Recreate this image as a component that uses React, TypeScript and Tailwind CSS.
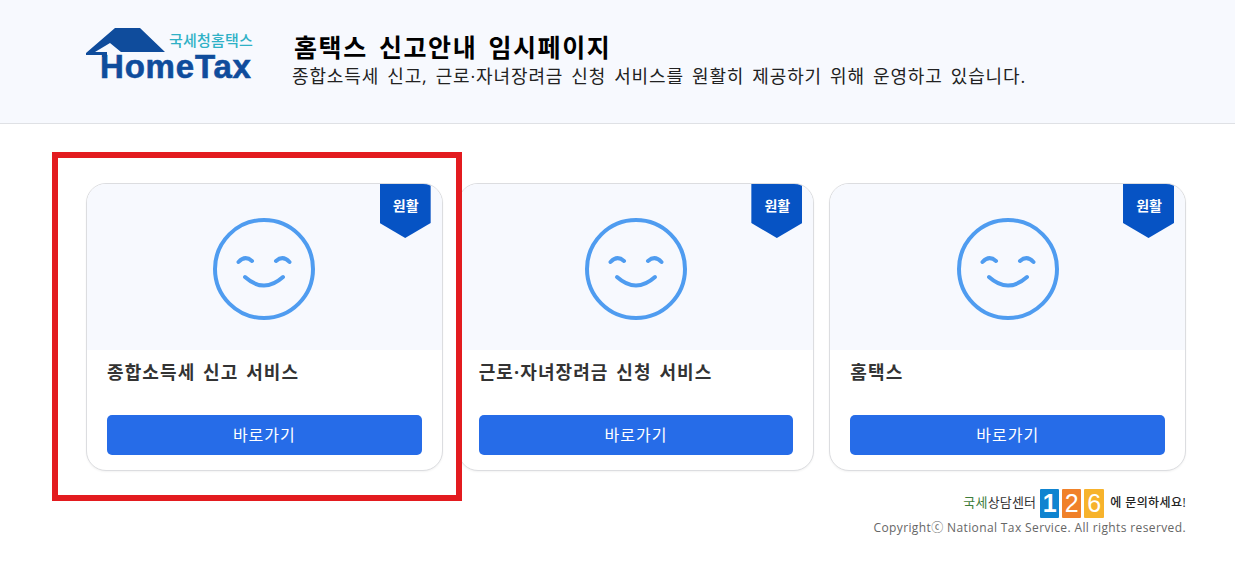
import React from "react";

const kr = "font-['Open_Sans','Noto_Sans_CJK_KR',sans-serif]";

const cards = [
  { title: "종합소득세 신고 서비스" },
  { title: "근로·자녀장려금 신청 서비스" },
  { title: "홈택스" },
];

const Logo = () => (
  <div className="relative w-[170px] h-[54px] shrink-0">
    {/* roof */}
    <svg width="85" height="32" viewBox="0 0 85 32" className="absolute left-0 top-0">
      <path d="M30 1 L55 1 L80 25 L36 25 L25 16 L10 25 L22 25 L22 30 L17 30 L17 28 L1 28 L1 26 Z" fill="#0f4c9c" />
    </svg>
    <span className="absolute left-[84px] top-[3px] text-[15px] leading-[20px] tracking-[0.2px] font-medium text-[#2fb1c6] whitespace-nowrap">
      국세청홈택스
    </span>
    <span className="absolute left-[15px] top-[23px] text-[33px] leading-[33px] font-bold tracking-[0.8px] text-[#0f4c9c] [-webkit-text-stroke:0.6px_#0f4c9c] font-['Liberation_Sans',sans-serif]">
      HomeTax
    </span>
  </div>
);

const Smile = () => (
  <svg width="104" height="104" viewBox="0 0 104 104" fill="none" stroke="#4f9cf0" strokeLinecap="round" strokeWidth="4">
    <circle cx="52" cy="52" r="49" />
    <path d="M26.5 45 Q33 38 40 44" />
    <path d="M64 44 Q71 38 77.5 45" />
    <path d="M33 60 Q52 77 71 60" />
  </svg>
);

const Card = ({ title }: { title: string }) => (
  <div className="relative flex-1 h-[288px] rounded-[20px] border border-[#dcdde0] bg-white overflow-hidden shadow-[0_1px_2px_rgba(0,0,0,0.05)]">
    <div className="h-[166px] bg-[#f7f9fe] flex items-center justify-center pt-[4px]">
      <Smile />
    </div>
    <div className="absolute right-[11px] top-0 w-[51px] h-[54px] bg-[#0653c4] [clip-path:polygon(0_0,100%_0,100%_72%,50%_100%,0_72%)]">
      <div className="h-[42px] flex items-center justify-center text-[14px] font-bold text-white pl-[1px]">원활</div>
    </div>
    <div className="px-5 pt-[7px]">
      <h2 className="text-[18px] leading-[30px] font-bold text-[#333333] tracking-[1.1px] [word-spacing:2px]">{title}</h2>
      <button className="mt-[28px] w-full h-[40px] rounded-[5px] bg-[#266ce8] text-white text-[16px] tracking-[1px] pb-[1px]">
        바로가기
      </button>
    </div>
  </div>
);

export default function App() {
  return (
    <div className={`relative min-h-[562px] bg-white ${kr}`}>
      {/* Header */}
      <header className="h-[124px] bg-[#f7f9fe] border-b border-[#dfe1e5] flex pl-[85px] pt-[27px]">
        <Logo />
        <div className="ml-[37px] pt-[3px]">
          <h1 className="text-[25px] leading-[34px] ml-[2px] font-bold text-black tracking-[1.6px] [word-spacing:3px]">홈택스 신고안내 임시페이지</h1>
          <p className="text-[18px] leading-[24px] text-[#222222] tracking-[0.87px] [word-spacing:2.5px]">
            종합소득세 신고, 근로·자녀장려금 신청 서비스를 원활히 제공하기 위해 운영하고 있습니다.
          </p>
        </div>
      </header>

      {/* Cards */}
      <main className="w-[1100px] ml-[86px] pt-[59px]">
        <div className="flex gap-[15px]">
          {cards.map((c) => (
            <Card key={c.title} title={c.title} />
          ))}
        </div>

        {/* Footer */}
        <footer className="mt-[17px] flex flex-col items-end">
          <div className="flex items-center h-[30px]">
            <span className="text-[13px] tracking-[0.2px] text-[#3f7d3a]">국세<span className="text-[#333333]">상담센터</span></span>
            <div className="flex gap-[3px] ml-[4px] mr-[6px] text-[25px] leading-[29px] text-white font-['Liberation_Sans',sans-serif]">
              <span className="w-[19px] h-[29px] rounded-[1px] bg-[#0f84d0] font-bold flex items-center justify-center">1</span>
              <span className="w-[19px] h-[29px] rounded-[1px] bg-[#f0812a] flex items-center justify-center">2</span>
              <span className="w-[20px] h-[29px] rounded-[1px] bg-[#f7b32c] flex items-center justify-center">6</span>
            </div>
            <span className="text-[12px] font-medium text-[#222222] tracking-[0.4px]">에 문의하세요!</span>
          </div>
          <p className="mt-[1px] text-[12px] leading-[18px] text-[#666666] tracking-[0.38px]">
            Copyrightⓒ National Tax Service. All rights reserved.
          </p>
        </footer>
      </main>

      {/* Red highlight box */}
      <div className="absolute left-[52px] top-[152px] w-[410px] h-[349px] border-[6px] border-[#e31b1f] pointer-events-none" />
    </div>
  );
}
